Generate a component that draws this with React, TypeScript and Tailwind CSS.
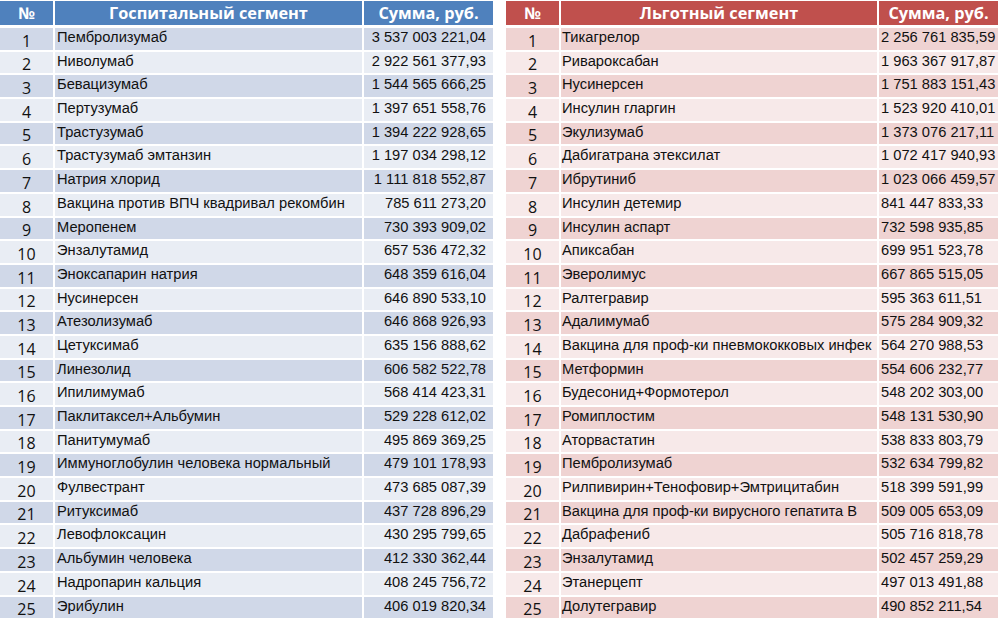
import React from 'react'

type Row = [string, string]

const hospital: Row[] = [
  ['Пембролизумаб', '3 537 003 221,04'],
  ['Ниволумаб', '2 922 561 377,93'],
  ['Бевацизумаб', '1 544 565 666,25'],
  ['Пертузумаб', '1 397 651 558,76'],
  ['Трастузумаб', '1 394 222 928,65'],
  ['Трастузумаб эмтанзин', '1 197 034 298,12'],
  ['Натрия хлорид', '1 111 818 552,87'],
  ['Вакцина против ВПЧ квадривал рекомбин', '785 611 273,20'],
  ['Меропенем', '730 393 909,02'],
  ['Энзалутамид', '657 536 472,32'],
  ['Эноксапарин натрия', '648 359 616,04'],
  ['Нусинерсен', '646 890 533,10'],
  ['Атезолизумаб', '646 868 926,93'],
  ['Цетуксимаб', '635 156 888,62'],
  ['Линезолид', '606 582 522,78'],
  ['Ипилимумаб', '568 414 423,31'],
  ['Паклитаксел+Альбумин', '529 228 612,02'],
  ['Панитумумаб', '495 869 369,25'],
  ['Иммуноглобулин человека нормальный', '479 101 178,93'],
  ['Фулвестрант', '473 685 087,39'],
  ['Ритуксимаб', '437 728 896,29'],
  ['Левофлоксацин', '430 295 799,65'],
  ['Альбумин человека', '412 330 362,44'],
  ['Надропарин кальция', '408 245 756,72'],
  ['Эрибулин', '406 019 820,34'],
]

const preferential: Row[] = [
  ['Тикагрелор', '2 256 761 835,59'],
  ['Ривароксабан', '1 963 367 917,87'],
  ['Нусинерсен', '1 751 883 151,43'],
  ['Инсулин гларгин', '1 523 920 410,01'],
  ['Экулизумаб', '1 373 076 217,11'],
  ['Дабигатрана этексилат', '1 072 417 940,93'],
  ['Ибрутиниб', '1 023 066 459,57'],
  ['Инсулин детемир', '841 447 833,33'],
  ['Инсулин аспарт', '732 598 935,85'],
  ['Апиксабан', '699 951 523,78'],
  ['Эверолимус', '667 865 515,05'],
  ['Ралтегравир', '595 363 611,51'],
  ['Адалимумаб', '575 284 909,32'],
  ['Вакцина для проф-ки пневмококковых инфек', '564 270 988,53'],
  ['Метформин', '554 606 232,77'],
  ['Будесонид+Формотерол', '548 202 303,00'],
  ['Ромиплостим', '548 131 530,90'],
  ['Аторвастатин', '538 833 803,79'],
  ['Пембролизумаб', '532 634 799,82'],
  ['Рилпивирин+Тенофовир+Эмтрицитабин', '518 399 591,99'],
  ['Вакцина для проф-ки вирусного гепатита В', '509 005 653,09'],
  ['Дабрафениб', '505 716 818,78'],
  ['Энзалутамид', '502 457 259,29'],
  ['Этанерцепт', '497 013 491,88'],
  ['Долутегравир', '490 852 211,54'],
]

function HeaderCell({ children, color }: { children: React.ReactNode; color: 'blue' | 'red' }) {
  return (
    <div className={`${color === 'blue' ? 'bg-[#4f81bd]' : 'bg-[#c0504d]'} flex items-center justify-center pt-[1px] leading-none whitespace-nowrap overflow-hidden`}>
      {children}
    </div>
  )
}

function HospitalTable() {
  return (
    <div className="flex flex-col w-[493px] shrink-0">
      <div className="grid grid-cols-[53px_307px_129px] gap-x-[2px] h-[24px] text-white font-bold text-[16.3px] font-['Open_Sans',sans-serif]">
        <HeaderCell color="blue">№</HeaderCell>
        <HeaderCell color="blue">Госпитальный сегмент</HeaderCell>
        <HeaderCell color="blue">Сумма, руб.</HeaderCell>
      </div>
      <div className="flex flex-col gap-y-[2px] mt-[3px]">
        {hospital.map(([name, sum], i) => {
          const bg = i % 2 === 0 ? 'bg-[#d0d8e8]' : 'bg-[#e9edf4]'
          return (
            <div key={i} className="grid grid-cols-[53px_307px_129px] gap-x-[2px] h-[21.7px] text-[#111] font-['Liberation_Sans',Arial,sans-serif] text-[14.7px] leading-[17px]">
              <div className={`${bg} font-['Open_Sans',sans-serif] text-[16px] leading-[16px] flex items-end justify-center pb-[1px]`}>{i + 1}</div>
              <div className={`${bg} pt-[1px] pl-[2px] whitespace-nowrap overflow-hidden`}>{name}</div>
              <div className={`${bg} pt-[1px] pr-[7px] text-right whitespace-nowrap overflow-hidden`}>{sum}</div>
            </div>
          )
        })}
      </div>
    </div>
  )
}

function PreferentialTable() {
  return (
    <div className="flex flex-col w-[492px] shrink-0">
      <div className="grid grid-cols-[53px_316px_119px] gap-x-[2px] h-[24px] text-white font-bold text-[16.3px] font-['Open_Sans',sans-serif]">
        <HeaderCell color="red">№</HeaderCell>
        <HeaderCell color="red">Льготный сегмент</HeaderCell>
        <HeaderCell color="red">Сумма, руб.</HeaderCell>
      </div>
      <div className="flex flex-col gap-y-[2px] mt-[3px]">
        {preferential.map(([name, sum], i) => {
          const bg = i % 2 === 0 ? 'bg-[#efd3d2]' : 'bg-[#f7e9e9]'
          return (
            <div key={i} className="grid grid-cols-[53px_316px_119px] gap-x-[2px] h-[21.7px] text-[#111] font-['Liberation_Sans',Arial,sans-serif] text-[14.7px] leading-[17px]">
              <div className={`${bg} font-['Open_Sans',sans-serif] text-[16px] leading-[16px] flex items-end justify-center pb-[1px]`}>{i + 1}</div>
              <div className={`${bg} pt-[1px] pl-[1px] whitespace-nowrap overflow-hidden`}>{name}</div>
              <div className={`${bg} pt-[1px] pl-[2px] whitespace-nowrap overflow-hidden`}>{sum}</div>
            </div>
          )
        })}
      </div>
    </div>
  )
}

export default function App() {
  return (
    <div className="w-[998px] h-[619px] bg-white overflow-hidden pt-[1px] flex gap-x-[13px]">
      <HospitalTable />
      <PreferentialTable />
    </div>
  )
}
